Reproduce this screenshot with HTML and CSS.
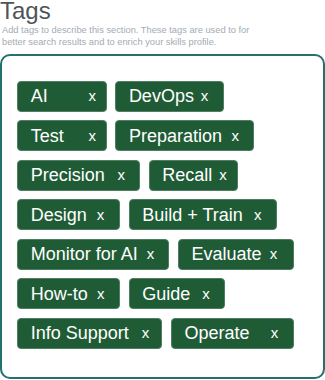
FILE: index.html
```html
<!DOCTYPE html>
<html>
<head>
<meta charset="utf-8">
<link rel="stylesheet" href="styles.css">
</head>
<body>
<section class="tags-section">
  <h1 class="title">Tags</h1>
  <p class="desc">Add tags to describe this section. These tags are used to for better search results and to enrich your skills profile.</p>
  <div class="tag-box">
    <span class="tag t-ai"><span class="label">AI</span><span class="x">x</span></span>
    <span class="tag t-devops"><span class="label">DevOps</span><span class="x">x</span></span>
    <span class="tag t-test"><span class="label">Test</span><span class="x">x</span></span>
    <span class="tag t-prep"><span class="label">Preparation</span><span class="x">x</span></span>
    <span class="tag t-precision"><span class="label">Precision</span><span class="x">x</span></span>
    <span class="tag t-recall"><span class="label">Recall</span><span class="x">x</span></span>
    <span class="tag t-design"><span class="label">Design</span><span class="x">x</span></span>
    <span class="tag t-build"><span class="label">Build + Train</span><span class="x">x</span></span>
    <span class="tag t-monitor"><span class="label">Monitor for AI</span><span class="x">x</span></span>
    <span class="tag t-evaluate"><span class="label">Evaluate</span><span class="x">x</span></span>
    <span class="tag t-howto"><span class="label">How-to</span><span class="x">x</span></span>
    <span class="tag t-guide"><span class="label">Guide</span><span class="x">x</span></span>
    <span class="tag t-info"><span class="label">Info Support</span><span class="x">x</span></span>
    <span class="tag t-operate"><span class="label">Operate</span><span class="x">x</span></span>
  </div>
</section>
</body>
</html>
```

FILE: styles.css
```css
html, body {
  margin: 0;
  padding: 0;
  background: #ffffff;
}

body {
  font-family: "Liberation Sans", Arial, sans-serif;
  width: 325px;
  height: 380px;
  overflow: hidden;
}

.tags-section {
  display: flex;
  flex-direction: column;
}

.title {
  margin: 0;
  font-size: 24px;
  line-height: 22px;
  font-weight: normal;
  color: #505357;
}

.desc {
  margin: 3px 0 0 2px;
  width: 262px;
  font-size: 9.3px;
  line-height: 11.5px;
  color: #a4abb3;
}

.tag-box {
  margin-top: 6px;
  height: 325px;
  box-sizing: border-box;
  border: 2px solid #23706e;
  border-radius: 10px;
  padding: 24.7px 15px 0 15.3px;
  display: flex;
  flex-wrap: wrap;
  align-content: flex-start;
  column-gap: 8.7px;
  row-gap: 8.5px;
}

.tag {
  box-sizing: border-box;
  height: 31px;
  display: flex;
  align-items: center;
  justify-content: space-between;
  padding-left: 12.5px;
  background: #1f5c36;
  border: 1px solid #4f7d62;
  border-radius: 4px;
  color: #ffffff;
}

.label {
  font-size: 18px;
  line-height: 20px;
  white-space: nowrap;
}

.x {
  font-size: 15px;
  line-height: 16px;
}

.t-ai { width: 89.4px; padding-right: 9.7px; }
.t-devops { width: 108.6px; padding-right: 14.7px; }
.t-test { width: 89.4px; padding-right: 9.7px; }
.t-prep { width: 138.6px; padding-right: 14px; }
.t-precision { width: 122.7px; padding-right: 14px; }
.t-recall { width: 89.3px; padding-right: 10.3px; }
.t-design { width: 102.7px; padding-right: 14.7px; }
.t-build { width: 148.4px; padding-right: 14.7px; }
.t-monitor { width: 152px; padding-right: 14px; }
.t-evaluate { width: 115.7px; padding-right: 15.4px; }
.t-howto { width: 102.7px; padding-right: 14.4px; }
.t-guide { width: 96px; padding-right: 14px; }
.t-info { width: 145px; padding-right: 12px; }
.t-operate { width: 123.3px; padding-right: 15px; }
```
